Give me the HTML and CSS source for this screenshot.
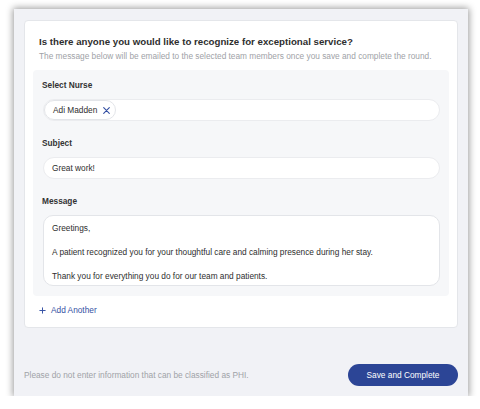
FILE: index.html
```html
<!DOCTYPE html>
<html>
<head>
<meta charset="utf-8">
<link rel="stylesheet" href="styles.css">
</head>
<body>
<div class="panel">
  <div class="card">
    <div class="head">
      <div class="title">Is there anyone you would like to recognize for exceptional service?</div>
      <div class="sub">The message below will be emailed to the selected team members once you save and complete the round.</div>
    </div>
    <div class="section">
      <div class="field">
        <div class="label">Select Nurse</div>
        <div class="input chips">
          <span class="chip">Adi Madden
            <svg class="x" width="7" height="7" viewBox="0 0 10 10"><path d="M1 1L9 9M9 1L1 9" stroke="#3450a3" stroke-width="1.6" stroke-linecap="round"/></svg>
          </span>
        </div>
      </div>
      <div class="field">
        <div class="label">Subject</div>
        <div class="input">Great work!</div>
      </div>
      <div class="field">
        <div class="label">Message</div>
        <div class="textarea">
          <p>Greetings,</p>
          <p>A patient recognized you for your thoughtful care and calming presence during her stay.</p>
          <p>Thank you for everything you do for our team and patients.</p>
        </div>
      </div>
    </div>
    <div class="add">
      <svg width="7" height="7" viewBox="0 0 8 8"><path d="M4 0.5V7.5M0.5 4H7.5" stroke="#3450a3" stroke-width="1.1"/></svg>
      <span>Add Another</span>
    </div>
  </div>
  <div class="footer">
    <span class="note">Please do not enter information that can be classified as PHI.</span>
    <button class="btn">Save and Complete</button>
  </div>
</div>
</body>
</html>
```
FILE: styles.css
```css
* { box-sizing: border-box; }
body {
  margin: 0;
  background: #ffffff;
  font-family: "Liberation Sans", Arial, sans-serif;
  color: #333;
}
.panel {
  margin: 9px 0 0 14px;
  width: 454px;
  height: 387px;
  background: #f1f2f6;
  box-shadow: 0 0 7px 1px rgba(0,0,0,0.4);
  padding: 11px 10px 0 10px;
  display: flex;
  flex-direction: column;
}
.card {
  background: #fff;
  border: 1px solid #e4e6ea;
  border-radius: 4px;
  padding: 14px 8px 11px 8px;
  height: 308px;
}
.head { padding-left: 6px; }
.title {
  font-size: 9.7px;
  font-weight: bold;
  line-height: 14px;
  color: #2e2e2e;
}
.sub {
  font-size: 8.3px;
  line-height: 14px;
  color: #a0a2a7;
}
.section {
  margin-top: 7px;
  background: #f6f7f9;
  border-radius: 4px;
  padding: 8px 9px 10px 9px;
  display: flex;
  flex-direction: column;
  gap: 15px;
}
.label {
  font-size: 8.3px;
  font-weight: bold;
  line-height: 14px;
  margin-bottom: 7px;
  color: #333;
}
.input {
  height: 22px;
  background: #fff;
  border: 1px solid #ebecef;
  border-radius: 11px;
  font-size: 8.3px;
  line-height: 20px;
  padding-left: 8px;
  color: #2e2e2e;
  margin-left: 1px;
}
.chips { padding-left: 0; display: flex; align-items: center; }
.chip {
  display: inline-flex;
  align-items: center;
  height: 20px;
  border: 1px solid #e3e5e9;
  border-radius: 10px;
  padding: 0 5px 0 8px;
  font-size: 8.3px;
  gap: 6px;
}
.textarea {
  margin-left: 1px;
  height: 71px;
  background: #fff;
  border: 1px solid #e3e5e9;
  border-radius: 10px;
  padding: 6px 8px 0 8px;
  font-size: 8.3px;
  line-height: 12px;
  color: #2e2e2e;
}
.textarea p { margin: 0 0 12px 0; }
.add {
  margin-top: 7px;
  padding-left: 6px;
  display: flex;
  align-items: center;
  gap: 5px;
  font-size: 8.3px;
  line-height: 14px;
  color: #3450a3;
}
.footer {
  margin-top: 36px;
  display: flex;
  align-items: center;
  justify-content: space-between;
}
.note {
  font-size: 8.3px;
  color: #a0a2a7;
}
.btn {
  width: 110px;
  height: 22px;
  border: none;
  border-radius: 11px;
  background: #2c4596;
  color: #fff;
  font-family: "Liberation Sans", Arial, sans-serif;
  font-size: 8.3px;
  padding: 0;
}
```
